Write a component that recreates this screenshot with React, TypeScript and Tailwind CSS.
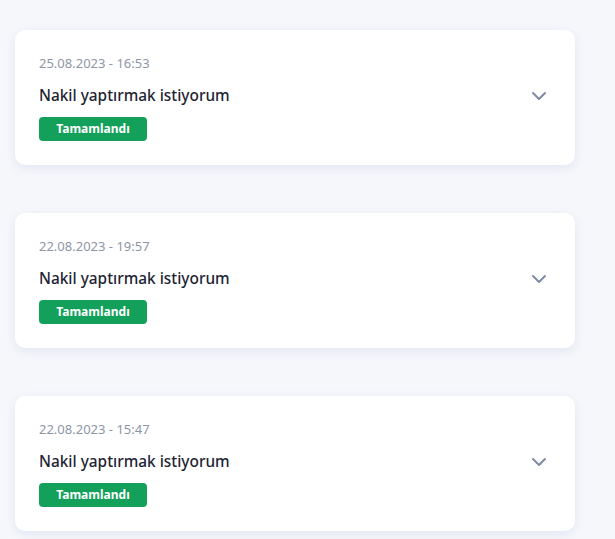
import React from "react"
import { ChevronDown } from "lucide-react"

interface Request {
	date: string
	title: string
	status: string
}

const requests: Request[] = [
	{ date: "25.08.2023 - 16:53", title: "Nakil yaptırmak istiyorum", status: "Tamamlandı" },
	{ date: "22.08.2023 - 19:57", title: "Nakil yaptırmak istiyorum", status: "Tamamlandı" },
	{ date: "22.08.2023 - 15:47", title: "Nakil yaptırmak istiyorum", status: "Tamamlandı" }
]

const RequestCard: React.FC<{ item: Request }> = ({ item }): React.ReactElement => {
	return (
		<div className="w-[560px] rounded-[10px] bg-white p-6 shadow-[0_3px_10px_rgba(200,210,230,0.45)]">
			<div className="text-[13px] leading-[18px] text-[#8e96a6]">{item.date}</div>
			<div className="mt-[14px] flex h-5 items-center justify-between">
				<h3 className="text-[15.4px] font-medium leading-5 text-[#1d2433]">{item.title}</h3>
				<ChevronDown className="-my-0.5 h-6 w-6 text-[#7d8ba3]" strokeWidth={2} />
			</div>
			<div className="mt-[11px] flex h-6 w-[108px] items-center justify-center rounded bg-[#13a05a] text-[12px] font-bold text-white">
				{item.status}
			</div>
		</div>
	)
}

export default function App(): React.ReactElement {
	return (
		<div className="min-h-[539px] bg-[#f6f7fb] pl-[15px] pt-[30px] font-['Noto_Sans',sans-serif]">
			<div className="flex flex-col gap-12">
				{requests.map((item, i) => (
					<RequestCard key={i} item={item} />
				))}
			</div>
		</div>
	)
}
